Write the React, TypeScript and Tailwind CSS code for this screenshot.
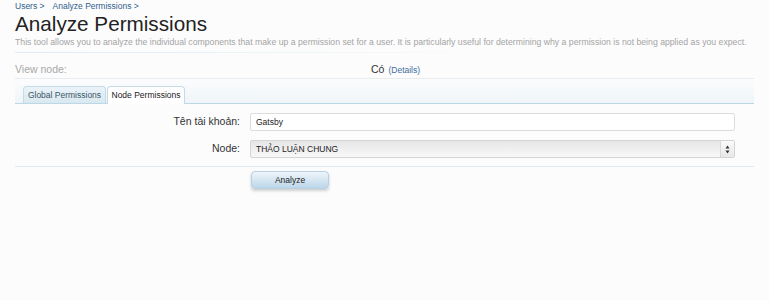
import React from 'react'

export default function App() {
  const font = { fontFamily: '"Liberation Sans", Arial, sans-serif' }

  return (
    <div className="min-h-[300px] w-[769px] bg-[#fcfcfd] px-[15px] text-[#222]" style={font}>
      {/* breadcrumb */}
      <div className="flex h-[11px] items-center gap-[5px] pt-[1px] text-[8.5px] text-[#2f5e8c]">
        <span>Users &gt;</span>
        <span className="ml-[3px]">Analyze Permissions &gt;</span>
      </div>

      <h1 className="mt-[1px] text-[20.7px] leading-[24px] text-[#222]">Analyze Permissions</h1>
      <p className="text-[8.7px] leading-[12px] text-[#a4a4a4]">
        This tool allows you to analyze the individual components that make up a permission set for a user. It is particularly useful for determining why a permission is not being applied as you expect.
      </p>
      <div className="mt-[4px] h-px w-[490px] bg-gradient-to-r from-[#dbeef3] to-transparent" />

      {/* view node row */}
      <div className="mt-[9px] flex h-[17px] items-center border-b border-[#e6ecef] text-[10.5px]">
        <span className="w-[356px] shrink-0 text-[#a8a8a8]">View node:</span>
        <span className="text-[#333]">Có</span>
        <span className="ml-[4px] text-[8.5px] text-[#3f6e9c]">(Details)</span>
      </div>

      {/* tabs */}
      <div className="flex h-[25px] items-end border-b border-[#bcd8e4] bg-gradient-to-b from-[#fcfcfd] to-[#eef5f8] pl-[8px] text-[8.5px]">
        <div className="mr-[1px] flex h-[17px] w-[83px] items-center justify-center rounded-t-[4px] border border-b-0 border-[#c4dbe6] bg-gradient-to-b from-[#eaf3f8] to-[#d9e8f0] text-[#3d5566]">
          Global Permissions
        </div>
        <div className="-mb-px flex h-[18px] w-[78px] items-center justify-center rounded-t-[4px] border border-b-0 border-[#c4dbe6] bg-white text-[#222]">
          Node Permissions
        </div>
      </div>

      {/* form */}
      <div className="border-b border-[#dcecf0] pb-[8px] pt-[9px] text-[10.5px]">
        <div className="flex items-center">
          <label className="w-[235px] shrink-0 pr-[10px] text-right text-[#333]">Tên tài khoản:</label>
          <div className="flex h-[18px] w-[485px] items-center rounded-[2px] border border-[#dcdcdc] bg-white px-[5px] text-[8.5px] text-[#222]">
            Gatsby
          </div>
        </div>
        <div className="mt-[9px] flex items-center">
          <label className="w-[235px] shrink-0 pr-[10px] text-right text-[#333]">Node:</label>
          <div className="flex h-[18px] w-[485px] items-center rounded-[2px] border border-[#d4d4d4] bg-gradient-to-b from-[#e6e6e6] to-[#f8f8f8] text-[8.5px] text-[#222]">
            <span className="flex-1 px-[5px]">THẢO LUẬN CHUNG</span>
            <span className="flex h-full w-[14px] flex-col items-center justify-center border-l border-[#d8d8d8] bg-gradient-to-b from-[#fafafa] to-[#e8e8e8]">
              <svg width="5" height="9" viewBox="0 0 5 9">
                <path d="M2.5 0.5 L4.5 3.5 L0.5 3.5 Z" fill="#333" />
                <path d="M2.5 8.5 L4.5 5.5 L0.5 5.5 Z" fill="#333" />
              </svg>
            </span>
          </div>
        </div>
      </div>

      <div className="flex pl-[236px] pt-[4px]">
        <button className="h-[18px] w-[78px] rounded-[4px] border border-[#b8d0e0] bg-gradient-to-b from-[#eef5fa] to-[#bcd6ea] text-[8.5px] text-[#222] shadow-[0_2px_3px_rgba(0,0,0,0.18)]">
          Analyze
        </button>
      </div>
    </div>
  )
}
